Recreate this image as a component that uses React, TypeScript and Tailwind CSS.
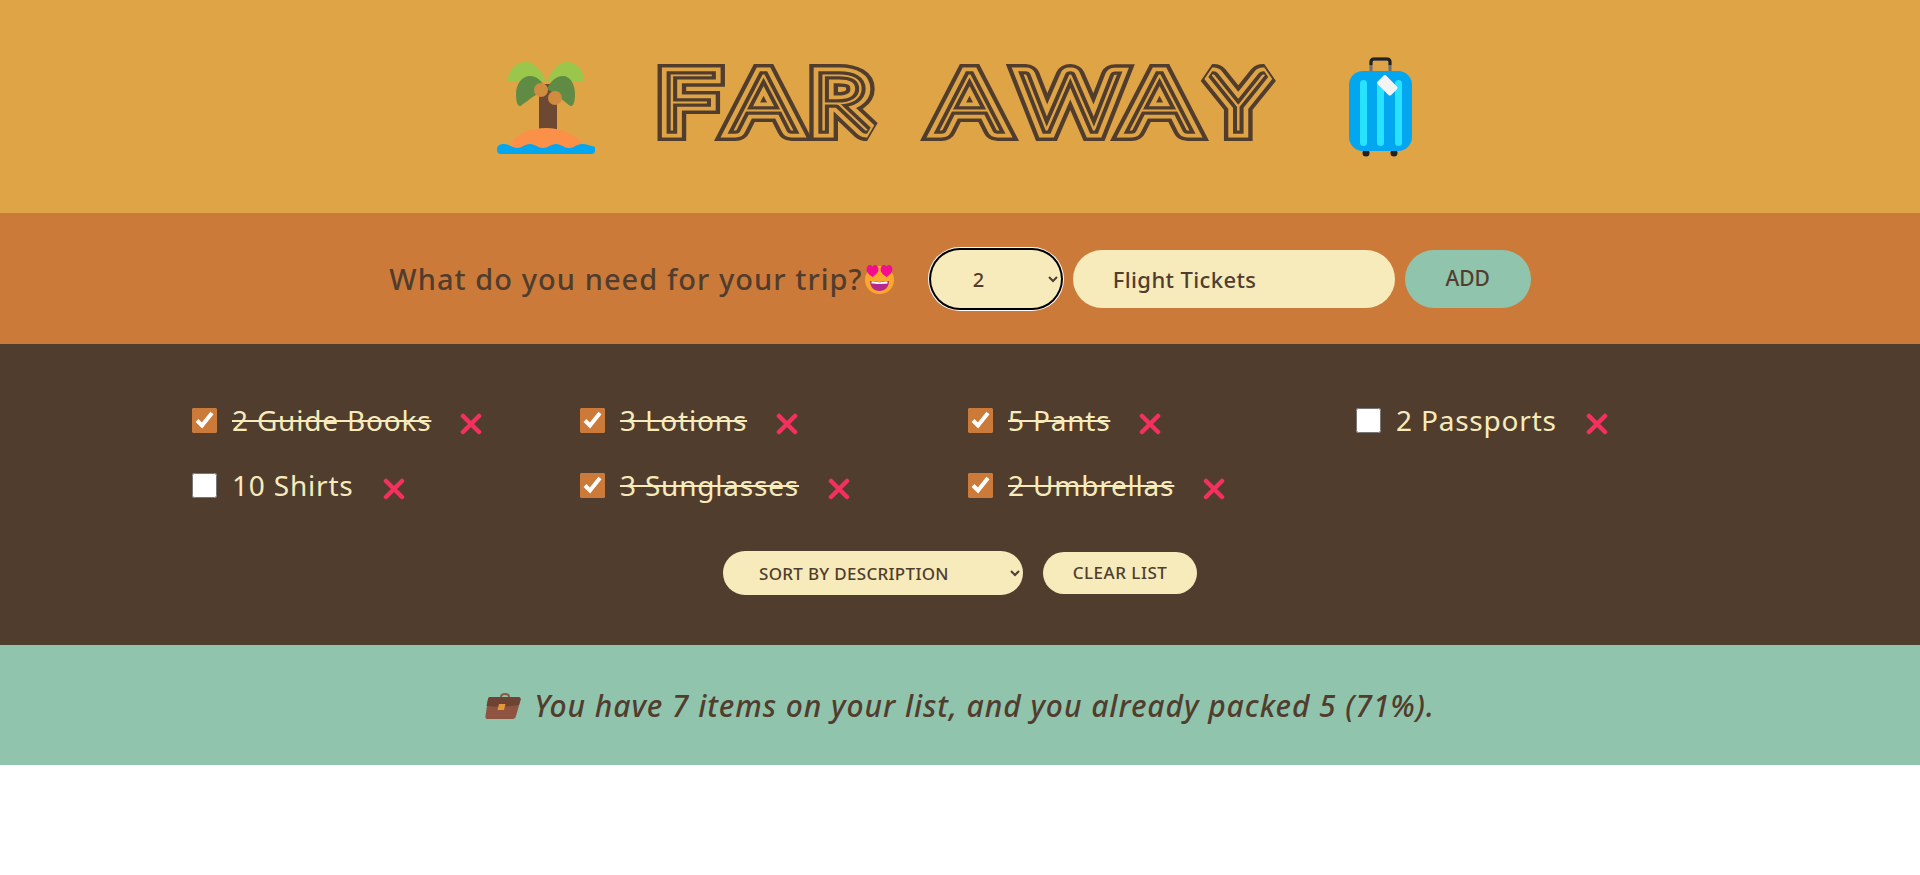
const items = [
  { id: 1, text: "2 Guide Books", packed: true },
  { id: 2, text: "3 Lotions", packed: true },
  { id: 3, text: "5 Pants", packed: true },
  { id: 4, text: "2 Passports", packed: false },
  { id: 5, text: "10 Shirts", packed: false },
  { id: 6, text: "3 Sunglasses", packed: true },
  { id: 7, text: "2 Umbrellas", packed: true },
];

function Palm() {
  return (
    <svg width="98" height="92" viewBox="0 0 98 92" className="mt-[2px]">
      <rect x="42" y="22" width="18" height="47" fill="#6d4934" />
      <path d="M14 80C22 71 35 66 49 66s27 5 35 14v6H14z" fill="#fb9148" />
      <path d="M0 87c0-4 4-5 7-5 5 0 8 4 13 4s8-4 13-4 8 4 13 4 8-4 13-4 8 4 13 4 8-4 13-4c5 0 9 2 13 3 0 0 0 1 0 3 0 3-1 4-4 4H4c-3 0-4-2-4-5z" fill="#02a7f0" />
      <path d="M49 20C44 7 37 0 29 0 18 0 11 10 11 18c0 2 1 2 3 2z" fill="#9ac64b" />
      <path d="M50 20C55 7 62 0 70 0c11 0 17 10 17 18 0 2-1 2-3 2z" fill="#9ac64b" />
      <path d="M49 27C45 18 39 14 33 14 25 14 19 22 19 32c0 6 1 12 4 12 2 0 9-8 26-17z" fill="#608b44" />
      <path d="M50 27c4-9 10-13 16-13 7 0 12 8 12 18 0 6-1 12-4 12-2 0-8-7-24-17z" fill="#608b44" />
      <circle cx="44" cy="28" r="7" fill="#d08c3e" />
      <circle cx="58" cy="36" r="7" fill="#d08c3e" />
    </svg>
  );
}

function Luggage() {
  return (
    <svg width="63" height="100" viewBox="0 0 63 100">
      <path d="M22 15V5c0-2 1-3 3-3h13c2 0 3 1 3 3v10" fill="none" stroke="#6e6e6e" strokeWidth="3" />
      <path d="M22 8V5c0-2 1-3 3-3h13c2 0 3 1 3 3v3" fill="none" stroke="#222" strokeWidth="3" />
      <circle cx="17" cy="96" r="3.5" fill="#222" />
      <circle cx="45" cy="96" r="3.5" fill="#222" />
      <rect x="0" y="14" width="63" height="80" rx="14" fill="#02a7f0" />
      <rect x="11" y="23" width="7" height="66" rx="3.5" fill="#27e3ff" />
      <rect x="28" y="23" width="7" height="66" rx="3.5" fill="#27e3ff" />
      <rect x="46" y="23" width="7" height="66" rx="3.5" fill="#27e3ff" />
      <rect x="29" y="22" width="19" height="12" rx="2" transform="rotate(45 38 28)" fill="#f3f3f3" />
    </svg>
  );
}

function HeartEyes() {
  return (
    <svg width="31" height="30" viewBox="0 0 31 30">
      <ellipse cx="15.5" cy="16" rx="14.5" ry="14" fill="#fca82d" />
      <path d="M6 17c3 0 9 1 9.500 1s6-1 9.500-1c0 6-4 10-9.500 10S6 23 6 17z" fill="#b7288c" />
      <path d="M7.500 17.500c3 0 7 .8 8 .8s5-.8 8-.8v2c-3 .3-5 .5-8 .5s-5-.2-8-.5z" fill="#fff" />
      <path d="M8.500 13C5 10.500 2.500 8.500 2.500 5.500c0-2.500 1.700-4.500 3.600-4.500 1.100 0 1.900.6 2.400 1.700C9 1.600 9.800 1 10.900 1c1.900 0 3.600 2 3.600 4.500 0 3-2.500 5-6 7.500z" fill="#f50d8f" />
      <path d="M22.500 13C19 10.500 16.500 8.500 16.500 5.500c0-2.500 1.700-4.500 3.600-4.500 1.100 0 1.900.6 2.400 1.700.5-1.100 1.300-1.700 2.400-1.700 1.900 0 3.600 2 3.600 4.500 0 3-2.500 5-6 7.500z" fill="#f50d8f" />
    </svg>
  );
}

function Briefcase() {
  return (
    <svg width="36" height="27" viewBox="0 0 36 27">
      <path d="M16 5c0-4 8-4 8 0" fill="none" stroke="#8a5a48" strokeWidth="2" />
      <path d="M5 5h28c2 0 3 1 2.500 3L31 24c-.5 2-1.500 3-3.500 3H3c-2 0-3-1-2.500-3L3 7c.3-1.300 1-2 2-2z" fill="#8f5342" />
      <path d="M5 5h28c2 0 3 1 2.500 3L34 13c-10 2-22 2-32.500 1L3 7c.3-1.300 1-2 2-2z" fill="#6d4434" />
      <path d="M14 12h6.500l-1.500 6h-6.500z" fill="#e8963a" />
    </svg>
  );
}

function Cross() {
  return (
    <svg width="22" height="22" viewBox="0 0 22 22" className="mt-[7px] shrink-0">
      <path d="M3 3l16 16M19 3L3 19" stroke="#f4305f" strokeWidth="4.500" strokeLinecap="round" />
    </svg>
  );
}

// the display face is not installed: thin Lato stroked in nested bands gives the inline look
const titleX = "4.100 62.100 125.500 190 226.900 293.300 378.900 444.500";
const titleLayers = [
  { width: 22, color: "#513d2e" },
  { width: 15, color: "#dfa446" },
  { width: 7.5, color: "#513d2e" },
  { width: 1, color: "#dfa446" },
];

function Title() {
  return (
    <h1>
      <svg width="694" height="110" viewBox="0 0 694 110" className="font-['Lato',sans-serif] text-[78px] font-thin">
        <g transform="scale(1.25 1)">
          {titleLayers.map((l, i) => (
            <text
              key={l.width}
              aria-hidden={i < titleLayers.length - 1}
              x={titleX}
              y="78.500"
              fill={l.color}
              stroke={l.color}
              strokeWidth={l.width}
              strokeLinejoin="miter"
              strokeMiterlimit="2"
            >
              FAR AWAY
            </text>
          ))}
        </g>
      </svg>
    </h1>
  );
}

export default function App() {
  return (
    <div className="flex min-h-[875px] flex-col bg-white font-['Noto_Sans',sans-serif] text-[#513d2e]">
      <header className="flex h-[213px] items-center justify-center bg-[#dfa446] pr-[12px]">
        <Palm />
        <div className="ml-[60px]"><Title /></div>
        <Luggage />
      </header>

      <form className="flex h-[131px] items-center justify-center bg-[#cc7a3a] pt-px">
        <h3 className="flex items-center text-[29px] font-medium tracking-[1.05px]">
          What do you need for your trip?
          <span className="ml-px"><HeartEyes /></span>
        </h3>
        <select
          defaultValue="2"
          className="ml-[36px] h-[58px] w-[130px] rounded-full bg-[#f7ebbb] px-[38px] text-[20px] font-medium shadow-[0_0_0_2px_#000,0_0_0_3px_#fff]"
        >
          <option value="1">1</option>
          <option value="2">2</option>
          <option value="3">3</option>
        </select>
        <input
          defaultValue="Flight Tickets"
          className="ml-[12px] h-[58px] w-[322px] rounded-full bg-[#f7ebbb] px-[40px] text-[22px] font-medium tracking-[0.4px] outline-none"
        />
        <button type="button" className="ml-[10px] h-[58px] w-[126px] rounded-full bg-[#90c4ad] text-[21px] font-medium uppercase">
          Add
        </button>
      </form>

      <section className="flex h-[301px] flex-col items-center bg-[#513d2e] pt-[60px]">
        <ul className="grid w-[80%] grid-cols-4 gap-x-4 gap-y-[33px]">
          {items.map((item) => (
            <li key={item.id} className="flex h-8 items-center text-[#f7ebbb]">
              <input
                type="checkbox"
                defaultChecked={item.packed}
                className="size-[25px] shrink-0 accent-[#cc7a3a]"
              />
              <span className={`ml-[15px] mr-[29px] text-[28px] tracking-[0.8px] ${item.packed ? "line-through" : ""}`}>
                {item.text}
              </span>
              <Cross />
            </li>
          ))}
        </ul>
        <div className="mt-[50px] flex items-center gap-5">
          <select className="h-11 w-[300px] rounded-full bg-[#f7ebbb] pl-8 pr-1 text-[17px] font-medium uppercase tracking-[0.3px]">
            <option>Sort by description</option>
            <option>Sort by input order</option>
            <option>Sort by packed status</option>
          </select>
          <button type="button" className="h-[42px] w-[154px] rounded-full bg-[#f7ebbb] text-[17px] font-medium uppercase tracking-[0.5px]">
            Clear list
          </button>
        </div>
      </section>

      <footer className="flex h-[120px] items-center justify-center gap-[13px] bg-[#90c4ad] text-[30px] font-medium tracking-[0.95px]">
        <Briefcase />
        <em>You have 7 items on your list, and you already packed 5 (71%).</em>
      </footer>
    </div>
  );
}
